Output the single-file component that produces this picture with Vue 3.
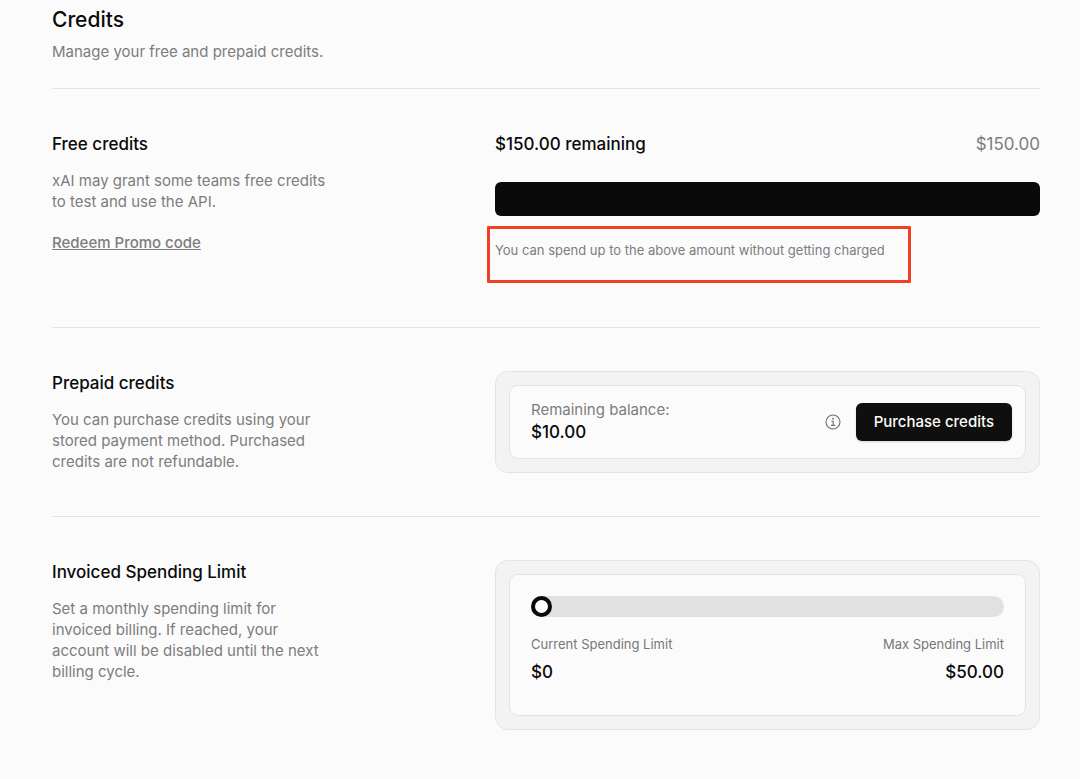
<script setup>
import { ref } from "vue";

const freeTotal = 150;
const freeRemaining = 150;
const balance = 10;
const maxLimit = 50;
const limit = ref(0);

const money = (value) => `$${value.toFixed(2)}`;
</script>

<template>
  <main class="credits">
    <header class="header">
      <h1>Credits</h1>
      <p>Manage your free and prepaid credits.</p>
    </header>

    <section class="row">
      <div class="info">
        <h2>Free credits</h2>
        <p>xAI may grant some teams free credits to test and use the API.</p>
        <a href="#redeem">Redeem Promo code</a>
      </div>
      <div class="content">
        <div class="amounts">
          <strong>{{ money(freeRemaining) }} remaining</strong>
          <span>{{ money(freeTotal) }}</span>
        </div>
        <div class="meter">
          <div
            class="meter-fill"
            :style="{ width: `${(freeRemaining / freeTotal) * 100}%` }"
          ></div>
        </div>
        <p class="note">
          You can spend up to the above amount without getting charged
        </p>
      </div>
    </section>

    <section class="row">
      <div class="info">
        <h2>Prepaid credits</h2>
        <p>
          You can purchase credits using your stored payment method. Purchased
          credits are not refundable.
        </p>
      </div>
      <div class="content card">
        <div class="panel balance">
          <div class="balance-text">
            <span>Remaining balance:</span>
            <strong>{{ money(balance) }}</strong>
          </div>
          <svg class="info-icon" viewBox="0 0 16 16" aria-hidden="true">
            <circle cx="8" cy="8" r="7" />
            <path d="M6.3 7.2H8.2V11.3M6 11.4H10.2" />
            <circle class="dot" cx="8" cy="4.7" r="0.9" />
          </svg>
          <button type="button">Purchase credits</button>
        </div>
      </div>
    </section>

    <section class="row">
      <div class="info">
        <h2>Invoiced Spending Limit</h2>
        <p>
          Set a monthly spending limit for invoiced billing. If reached, your
          account will be disabled until the next billing cycle.
        </p>
      </div>
      <div class="content card">
        <div class="panel limit">
          <input
            id="limit"
            v-model.number="limit"
            type="range"
            min="0"
            :max="maxLimit"
          />
          <div class="limit-labels">
            <label for="limit">Current Spending Limit</label>
            <span>Max Spending Limit</span>
          </div>
          <div class="limit-values">
            <strong>${{ limit }}</strong>
            <strong>{{ money(maxLimit) }}</strong>
          </div>
        </div>
      </div>
    </section>
  </main>
</template>

<style>
body {
  margin: 0;
  background: #fbfbfb;
}
</style>

<style scoped>
.credits {
  padding: 5px 40px 0 52px;
  font-family: Inter, "Liberation Sans", sans-serif;
  font-size: 15px;
  line-height: 21px;
  color: #0a0a0a;
}

h1,
h2,
p {
  margin: 0;
}

h1 {
  font-size: 21px;
  line-height: 30px;
  font-weight: 500;
}

h2 {
  font-size: 17px;
  line-height: 24px;
  font-weight: 500;
}

strong {
  font-size: 17px;
  line-height: 24px;
  font-weight: 500;
}

.header {
  padding-bottom: 26px;
}

.header p {
  margin-top: 6px;
  color: #7d7d7d;
}

.row {
  display: grid;
  grid-template-columns: 443px 1fr;
  align-items: start;
  padding: 43px 0;
  border-top: 1px solid #e4e4e4;
}

.info p {
  max-width: 280px;
  margin-top: 14px;
  color: #7d7d7d;
}

.info a {
  display: inline-block;
  margin-top: 20px;
  font-weight: 500;
  color: #7d7d7d;
}

.amounts,
.limit-labels,
.limit-values {
  display: flex;
  justify-content: space-between;
}

.amounts span {
  font-size: 17px;
  line-height: 24px;
  color: #7d7d7d;
}

.meter {
  height: 34px;
  margin-top: 26px;
  border-radius: 6px;
  background: #e2e2e2;
  overflow: hidden;
}

.meter-fill {
  height: 100%;
  background: #0a0a0a;
}

.note {
  box-sizing: border-box;
  width: 424px;
  max-width: 100%;
  height: 57px;
  margin: 10px 0 1px -8px;
  padding: 11px 5px;
  border: 3px solid #ef4023;
  border-radius: 1px;
  font-size: 13px;
  line-height: 20px;
  color: #7d7d7d;
}

.card {
  padding: 13px;
  border: 1px solid #e4e4e4;
  border-radius: 13px;
  background: #f3f3f3;
}

.panel {
  border: 1px solid #e4e4e4;
  border-radius: 9px;
  background: #fbfbfb;
}

.balance {
  display: flex;
  align-items: center;
  padding: 13px 13px 14px 21px;
}

.balance-text {
  display: flex;
  flex: 1;
  flex-direction: column;
  color: #7d7d7d;
}

.balance-text strong {
  color: #0a0a0a;
}

.info-icon {
  width: 16px;
  height: 16px;
  margin-right: 15px;
  fill: none;
  stroke: #6f6f6f;
  stroke-width: 1.1;
}

.info-icon .dot {
  fill: #6f6f6f;
  stroke: none;
}

button {
  height: 38px;
  padding: 0 18px;
  border: 0;
  border-radius: 6px;
  background: #0f0f0d;
  box-shadow: 0 1px 2px rgba(0, 0, 0, 0.15);
  color: #fcfcfc;
  font: 500 15px/21px Inter, "Liberation Sans", sans-serif;
  cursor: pointer;
}

.limit {
  padding: 21px 21px 31px;
}

input[type="range"] {
  appearance: none;
  display: block;
  width: 100%;
  height: 21px;
  margin: 0;
  border-radius: 11px;
  background: #e1e1e1;
  cursor: pointer;
}

input[type="range"]::-webkit-slider-thumb {
  appearance: none;
  box-sizing: border-box;
  width: 21px;
  height: 21px;
  border: 4px solid #0a0a0a;
  border-radius: 50%;
  background: #fff;
}

.limit-labels {
  margin-top: 17px;
  font-size: 13px;
  color: #777;
}

.limit-values {
  margin-top: 5px;
}
</style>
